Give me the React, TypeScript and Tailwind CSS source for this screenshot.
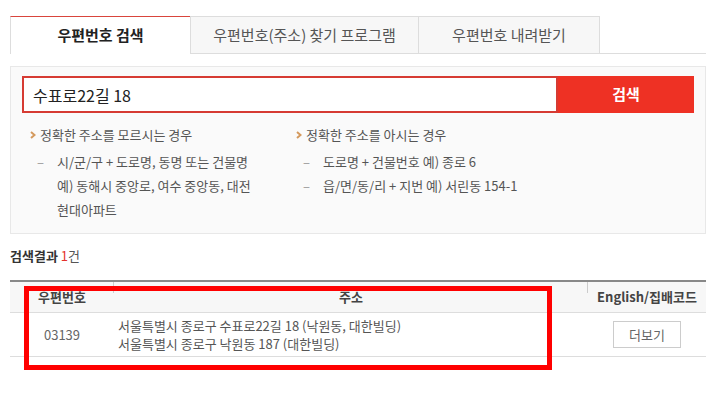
export default function App() {
  const font = { fontFamily: '"Noto Sans CJK KR", "Noto Sans", sans-serif' };
  return (
    <div className="relative w-[717px] h-[410px] bg-white text-[#555]" style={font}>
      <div className="px-[10px] pt-[16px] w-[716px]">
        {/* Tabs */}
        <div className="flex h-[38px] text-[15px]">
          <div className="w-[180px] flex items-center justify-center bg-white border-t border-l border-t-[#d9453d] border-l-[#ddd] font-bold text-[#222]">
            우편번호 검색
          </div>
          <div className="w-[228px] flex items-center justify-center bg-[#f7f7f7] border border-[#ddd] border-r-0">
            우편번호(주소) 찾기 프로그램
          </div>
          <div className="w-[182px] flex items-center justify-center bg-[#f7f7f7] border border-[#ddd]">
            우편번호 내려받기
          </div>
          <div className="flex-1 border-b border-[#ddd]" />
        </div>

        {/* Search panel */}
        <div className="mt-[12px] h-[168px] border border-[#e8e8e8] bg-[#fafafa] px-[11px] pt-[9px]">
          <div className="flex h-[37px]">
            <div className="w-[536px] border-2 border-[#d63b33] bg-white flex items-center pl-[9px] text-[16px] text-[#222]">
              수표로22길 18
            </div>
            <button className="w-[136px] bg-[#ee3124] text-white font-bold text-[15px]">검색</button>
          </div>
          <div className="flex mt-[10px] text-[13px] leading-[24px]">
            <div className="w-[274px] pl-[8px]">
              <Heading text="정확한 주소를 모르시는 경우" />
              <div className="mt-[3px]">
                <Sub lines={["시/군/구 + 도로명, 동명 또는 건물명", "예) 동해시 중앙로, 여수 중앙동, 대전", "현대아파트"]} />
              </div>
            </div>
            <div className="flex-1">
              <Heading text="정확한 주소를 아시는 경우" />
              <div className="mt-[3px]">
                <Sub lines={["도로명 + 건물번호 예) 종로 6"]} />
                <Sub lines={["읍/면/동/리 + 지번 예) 서린동 154-1"]} />
              </div>
            </div>
          </div>
        </div>

        {/* Results */}
        <div className="mt-[12px] h-[20px] flex items-center text-[13px] font-bold text-[#333]">
          검색결과&nbsp;<span className="text-[#e4322b] font-normal">1</span><span className="font-normal text-[#555]">건</span>
        </div>
        <div className="mt-[14px] border-t-2 border-[#888] text-[13px]">
          <div className="flex h-[31px] bg-[#f7f7f7] border-b border-[#ddd] font-bold text-[#444]">
            <div className="relative w-[104px] flex items-center justify-center">
              우편번호
              <span className="absolute right-0 top-0 h-[11px] w-px bg-[#ccc]" />
            </div>
            <div className="relative w-[474px] flex items-center justify-center">
              주소
              <span className="absolute right-0 top-0 h-[11px] w-px bg-[#ccc]" />
            </div>
            <div className="flex-1 flex items-center justify-center">English/집배코드</div>
          </div>
          <div className="flex h-[44px] border-b border-[#ddd]">
            <div className="w-[104px] flex items-center justify-center text-[#666]">03139</div>
            <div className="w-[474px] flex flex-col justify-center pl-[4px] leading-[18px] text-[#555]">
              <span>서울특별시 종로구 수표로22길 18 (낙원동, 대한빌딩)</span>
              <span>서울특별시 종로구 낙원동 187 (대한빌딩)</span>
            </div>
            <div className="flex-1 flex items-center justify-center">
              <button className="w-[68px] h-[27px] border border-[#ccc] bg-white text-[#666] text-[13px]">더보기</button>
            </div>
          </div>
        </div>
      </div>

      {/* annotation box */}
      <div className="absolute left-[24px] top-[286px] w-[528px] h-[84px] border-[5px] border-[#ff0000]" />
    </div>
  );
}

function Heading({ text }: { text: string }) {
  return (
    <div className="flex items-center">
      <svg width="6" height="8" viewBox="0 0 6 8" className="mr-[4px]">
        <path d="M1 1 L4.5 4 L1 7" stroke="#d49a5e" strokeWidth="2" fill="none" />
      </svg>
      <span>{text}</span>
    </div>
  );
}

function Sub({ lines }: { lines: string[] }) {
  return (
    <div className="flex pl-[7px]">
      <span className="w-[20px] text-[#999]">–</span>
      <div>
        {lines.map((l) => (
          <div key={l}>{l}</div>
        ))}
      </div>
    </div>
  );
}
